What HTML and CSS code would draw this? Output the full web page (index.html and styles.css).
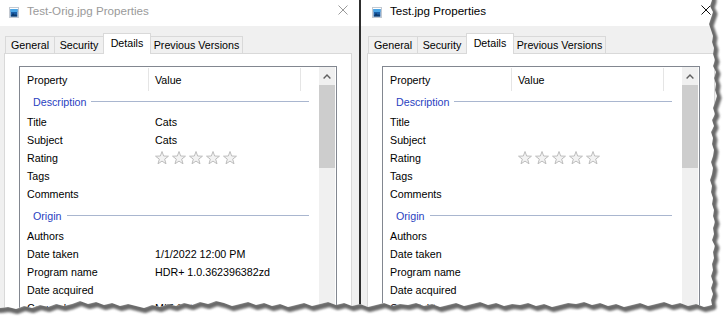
FILE: index.html
```html
<!DOCTYPE html>
<html lang="en">
<head>
<meta charset="utf-8">
<title>Properties</title>
<link rel="stylesheet" href="styles.css">
</head>
<body>
<svg class="defs" width="0" height="0" aria-hidden="true">
  <defs>
    <symbol id="star" viewBox="0 0 14 14">
      <polygon points="7,0.5 8.65,5.03 13.47,5.2 9.66,8.17 11,12.8 7,10.1 3,12.8 4.34,8.17 0.53,5.2 5.35,5.03" fill="#f3f3f3" stroke="#bdbdbd" stroke-width="1" stroke-linejoin="round"/>
    </symbol>
    <symbol id="appicon" viewBox="0 0 10 11">
      <rect x="0.5" y="0.5" width="9" height="10" fill="#ffffff" stroke="#c3c9d1"/>
      <rect x="1.5" y="2" width="7" height="7.5" fill="#1b5fa8"/>
      <rect x="1.5" y="2" width="7" height="3" fill="#4aa6e6"/>
      <polygon points="1.5,9.5 4,6 6,8 7,7 8.5,9.5" fill="#0c3a6e"/>
    </symbol>
    <symbol id="chev" viewBox="0 0 8 5">
      <polyline points="0.6,4.4 4,1 7.4,4.4" fill="none" stroke="#606060" stroke-width="1.4"/>
    </symbol>
  </defs>
</svg>

<div class="screen">
  <section class="dialog">
    <header class="titlebar">
      <svg class="app-icon"><use href="#appicon"/></svg>
      <span class="title">Test-Orig.jpg Properties</span>
      <svg class="close" viewBox="0 0 10 10"><path d="M0.5 0.5 L9.5 9.5 M9.5 0.5 L0.5 9.5" stroke="#9a9a9a" stroke-width="1"/></svg>
    </header>
    <div class="body">
      <nav class="tabs">
        <span class="tab tab-general">General</span>
        <span class="tab tab-security">Security</span>
        <span class="tab tab-details tab-selected">Details</span>
        <span class="tab tab-prev">Previous Versions</span>
      </nav>
      <div class="panel">
        <div class="list">
          <div class="list-main">
            <div class="list-head"><span class="hcol hcol-prop">Property</span><span class="hcol hcol-val">Value</span></div>
            <div class="group"><span class="group-name">Description</span><span class="group-line"></span></div>
            <div class="row"><span class="label">Title</span><span class="value">Cats</span></div>
            <div class="row"><span class="label">Subject</span><span class="value">Cats</span></div>
            <div class="row"><span class="label">Rating</span><span class="value"><svg class="stars" viewBox="0 0 82 14"><use href="#star" x="0" width="14" height="14"/><use href="#star" x="17" width="14" height="14"/><use href="#star" x="34" width="14" height="14"/><use href="#star" x="51" width="14" height="14"/><use href="#star" x="68" width="14" height="14"/></svg></span></div>
            <div class="row"><span class="label">Tags</span><span class="value"></span></div>
            <div class="row"><span class="label">Comments</span><span class="value"></span></div>
            <div class="group group-spaced"><span class="group-name">Origin</span><span class="group-line"></span></div>
            <div class="row"><span class="label">Authors</span><span class="value"></span></div>
            <div class="row"><span class="label">Date taken</span><span class="value">1/1/2022 12:00 PM</span></div>
            <div class="row"><span class="label">Program name</span><span class="value">HDR+ 1.0.362396382zd</span></div>
            <div class="row"><span class="label">Date acquired</span><span class="value"></span></div>
            <div class="row"><span class="label">Copyright</span><span class="value">MIT Cats</span></div>
          </div>
          <div class="scrollbar">
            <div class="sb-up"><svg class="sb-chev"><use href="#chev"/></svg></div>
            <div class="sb-thumb"></div>
          </div>
        </div>
      </div>
    </div>
  </section>

  <div class="divider"></div>

  <section class="dialog dialog-right active">
    <header class="titlebar">
      <svg class="app-icon"><use href="#appicon"/></svg>
      <span class="title">Test.jpg Properties</span>
      <svg class="close" viewBox="0 0 10 10"><path d="M0.5 0.5 L9.5 9.5 M9.5 0.5 L0.5 9.5" stroke="#111111" stroke-width="1"/></svg>
    </header>
    <div class="body">
      <nav class="tabs">
        <span class="tab tab-general">General</span>
        <span class="tab tab-security">Security</span>
        <span class="tab tab-details tab-selected">Details</span>
        <span class="tab tab-prev">Previous Versions</span>
      </nav>
      <div class="panel">
        <div class="list">
          <div class="list-main">
            <div class="list-head"><span class="hcol hcol-prop">Property</span><span class="hcol hcol-val">Value</span></div>
            <div class="group"><span class="group-name">Description</span><span class="group-line"></span></div>
            <div class="row"><span class="label">Title</span><span class="value"></span></div>
            <div class="row"><span class="label">Subject</span><span class="value"></span></div>
            <div class="row"><span class="label">Rating</span><span class="value"><svg class="stars" viewBox="0 0 82 14"><use href="#star" x="0" width="14" height="14"/><use href="#star" x="17" width="14" height="14"/><use href="#star" x="34" width="14" height="14"/><use href="#star" x="51" width="14" height="14"/><use href="#star" x="68" width="14" height="14"/></svg></span></div>
            <div class="row"><span class="label">Tags</span><span class="value"></span></div>
            <div class="row"><span class="label">Comments</span><span class="value"></span></div>
            <div class="group group-spaced"><span class="group-name">Origin</span><span class="group-line"></span></div>
            <div class="row"><span class="label">Authors</span><span class="value"></span></div>
            <div class="row"><span class="label">Date taken</span><span class="value"></span></div>
            <div class="row"><span class="label">Program name</span><span class="value"></span></div>
            <div class="row"><span class="label">Date acquired</span><span class="value"></span></div>
            <div class="row"><span class="label">Copyright</span><span class="value"></span></div>
          </div>
          <div class="scrollbar">
            <div class="sb-up"><svg class="sb-chev"><use href="#chev"/></svg></div>
            <div class="sb-thumb"></div>
          </div>
        </div>
      </div>
    </div>
  </section>
</div>

<svg class="tear" width="725" height="318" viewBox="0 0 725 318" aria-hidden="true">
  <defs>
    <filter id="soft" x="-5%" y="-5%" width="110%" height="110%">
      <feGaussianBlur stdDeviation="1.1"/>
    </filter>
    <clipPath id="outside">
      <path clip-rule="evenodd" d="M-50,-50 H780 V370 H-50 Z M-20,-20 L712,-20 L712,0 L710,6 L713,12 L711,18 L709,24 L711,30 L713,36 L712,42 L714,48 L713,54 L715,60 L713,66 L716,72 L714,78 L716,84 L715,90 L717,96 L715,102 L713,108 L715,114 L712,120 L714,126 L711,132 L713,138 L712,144 L714,150 L713,156 L711,162 L713,168 L712,174 L710,180 L712,186 L711,192 L713,198 L712,204 L714,210 L713,216 L715,222 L713,228 L714,234 L712,240 L715,246 L713,252 L714,258 L712,264 L713,270 L711,276 L713,282 L711,288 L713,294 L711,300 L712,305 L704,307 L696,304 L688,306 L680,303 L672,305 L664,302 L656,304 L648,306 L640,303 L632,305 L624,307 L616,304 L608,306 L600,303 L592,305 L584,302 L576,304 L568,303 L560,305 L552,307 L544,304 L536,306 L528,303 L520,305 L512,304 L504,306 L496,303 L488,305 L480,302 L472,304 L464,306 L456,303 L448,305 L440,307 L432,304 L424,306 L416,303 L408,305 L400,304 L392,306 L384,303 L376,305 L368,307 L360,304 L352,306 L344,303 L336,305 L328,302 L320,304 L312,306 L304,303 L296,305 L288,307 L280,304 L272,306 L264,303 L256,305 L248,302 L240,304 L232,306 L224,303 L216,301 L208,304 L200,302 L192,305 L184,303 L176,306 L168,304 L160,307 L152,305 L144,308 L136,306 L128,304 L120,306 L112,303 L104,305 L96,302 L88,304 L80,301 L72,304 L64,306 L56,304 L48,307 L40,305 L32,308 L24,306 L16,309 L8,307 L0,308 L-20,308 Z"/>
    </clipPath>
  </defs>
  <g clip-path="url(#outside)">
    <rect x="-50" y="-50" width="830" height="420" fill="#ffffff"/>
    <path transform="translate(1.5,2)" filter="url(#soft)" fill="none" stroke="#6b6b6b" stroke-width="6" stroke-linejoin="round" d="M-20,-20 L712,-20 L712,0 L710,6 L713,12 L711,18 L709,24 L711,30 L713,36 L712,42 L714,48 L713,54 L715,60 L713,66 L716,72 L714,78 L716,84 L715,90 L717,96 L715,102 L713,108 L715,114 L712,120 L714,126 L711,132 L713,138 L712,144 L714,150 L713,156 L711,162 L713,168 L712,174 L710,180 L712,186 L711,192 L713,198 L712,204 L714,210 L713,216 L715,222 L713,228 L714,234 L712,240 L715,246 L713,252 L714,258 L712,264 L713,270 L711,276 L713,282 L711,288 L713,294 L711,300 L712,305 L704,307 L696,304 L688,306 L680,303 L672,305 L664,302 L656,304 L648,306 L640,303 L632,305 L624,307 L616,304 L608,306 L600,303 L592,305 L584,302 L576,304 L568,303 L560,305 L552,307 L544,304 L536,306 L528,303 L520,305 L512,304 L504,306 L496,303 L488,305 L480,302 L472,304 L464,306 L456,303 L448,305 L440,307 L432,304 L424,306 L416,303 L408,305 L400,304 L392,306 L384,303 L376,305 L368,307 L360,304 L352,306 L344,303 L336,305 L328,302 L320,304 L312,306 L304,303 L296,305 L288,307 L280,304 L272,306 L264,303 L256,305 L248,302 L240,304 L232,306 L224,303 L216,301 L208,304 L200,302 L192,305 L184,303 L176,306 L168,304 L160,307 L152,305 L144,308 L136,306 L128,304 L120,306 L112,303 L104,305 L96,302 L88,304 L80,301 L72,304 L64,306 L56,304 L48,307 L40,305 L32,308 L24,306 L16,309 L8,307 L0,308 L-20,308 Z"/>
  </g>
</svg>
</body>
</html>
```

FILE: styles.css
```css
html, body {
  margin: 0;
  padding: 0;
  width: 725px;
  height: 318px;
  overflow: hidden;
  background: #ffffff;
}

body {
  position: relative;
  font-family: "Liberation Sans", Arial, sans-serif;
  font-size: 10.7px;
  color: #000000;
}

.defs {
  position: absolute;
  width: 0;
  height: 0;
}

.screen {
  display: flex;
  height: 318px;
}

.dialog {
  flex: none;
  width: 359px;
  height: 318px;
  display: flex;
  flex-direction: column;
  overflow: hidden;
  background: #f0f0f0;
}

.dialog-right {
  width: 364px;
}

.divider {
  flex: none;
  width: 2px;
  background: #2e2e2e;
}

/* Title bar */
.titlebar {
  flex: none;
  width: 359px;
  height: 26px;
  display: flex;
  align-items: flex-start;
  background: #ffffff;
}

.dialog-right .titlebar {
  padding-left: 2px;
}

.app-icon {
  flex: none;
  width: 10px;
  height: 11px;
  margin: 7px 0 0 9px;
}

.title {
  margin: 3px 0 0 8px;
  font-size: 11.6px;
  line-height: 16px;
  color: #9a9a9a;
  white-space: nowrap;
}

.active .title {
  color: #000000;
}

.close {
  flex: none;
  width: 10px;
  height: 10px;
  margin: 5px 11px 0 auto;
}

/* Body */
.body {
  flex: 1;
  width: 355px;
  padding: 7px 0 0 4px;
  display: flex;
  flex-direction: column;
}

.dialog-right .body {
  padding-left: 6px;
}

.tabs {
  flex: none;
  display: flex;
  align-items: flex-end;
  height: 20px;
  margin-left: 1px;
  position: relative;
  z-index: 1;
}

.tab {
  flex: none;
  box-sizing: border-box;
  height: 17px;
  border: 1px solid #d9d9d9;
  border-bottom: 0;
  background: #f0f0f0;
  margin-right: -1px;
  text-align: center;
  line-height: 16px;
  white-space: nowrap;
}

.tab-general { width: 50px; }
.tab-security { width: 50px; }
.tab-details { width: 48px; }
.tab-prev { width: 93px; }

.tab-selected {
  height: 21px;
  margin-bottom: -1px;
  background: #ffffff;
  line-height: 18px;
  position: relative;
  z-index: 2;
}

.panel {
  flex: none;
  box-sizing: border-box;
  width: 348px;
  height: 280px;
  border: 1px solid #d9d9d9;
  background: #ffffff;
  padding: 12px 0 0 14px;
}

/* List view */
.list {
  box-sizing: border-box;
  width: 318px;
  height: 270px;
  border: 1px solid #828790;
  display: flex;
}

.list-main {
  flex: none;
  width: 299px;
}

.list-head {
  display: flex;
  box-sizing: border-box;
  height: 24px;
  padding-top: 1px;
}

.hcol {
  flex: none;
  box-sizing: border-box;
  height: 23px;
  padding-top: 1px;
  line-height: 22px;
  border-right: 1px solid #e5e5e5;
  white-space: nowrap;
}

.hcol-prop {
  width: 129px;
  padding-left: 7px;
}

.hcol-val {
  width: 152px;
  padding-left: 6px;
}

.group {
  display: flex;
  height: 22px;
  line-height: 22px;
  padding-left: 13px;
}

.group-spaced {
  margin-top: 2px;
}

.group-name {
  flex: none;
  color: #2a3fbf;
}

.group-line {
  flex: 1;
  align-self: flex-start;
  height: 1px;
  margin: 10px 10px 0 5px;
  background: #a9b6cf;
}

.row {
  display: flex;
  height: 18px;
  line-height: 18px;
  padding-left: 7px;
  white-space: nowrap;
}

.label {
  flex: none;
  width: 128px;
}

.value {
  flex: 1;
}

.stars {
  display: block;
  width: 82px;
  height: 14px;
  margin-top: 2px;
}

.scrollbar {
  flex: none;
  width: 16px;
  display: flex;
  flex-direction: column;
  background: #f0f0f0;
}

.sb-up {
  height: 18px;
  display: flex;
  align-items: center;
  justify-content: center;
}

.sb-chev {
  width: 8px;
  height: 5px;
}

.sb-thumb {
  height: 83px;
  background: #cdcdcd;
}

/* torn-edge overlay */
.tear {
  position: absolute;
  left: 0;
  top: 0;
  pointer-events: none;
}
```
